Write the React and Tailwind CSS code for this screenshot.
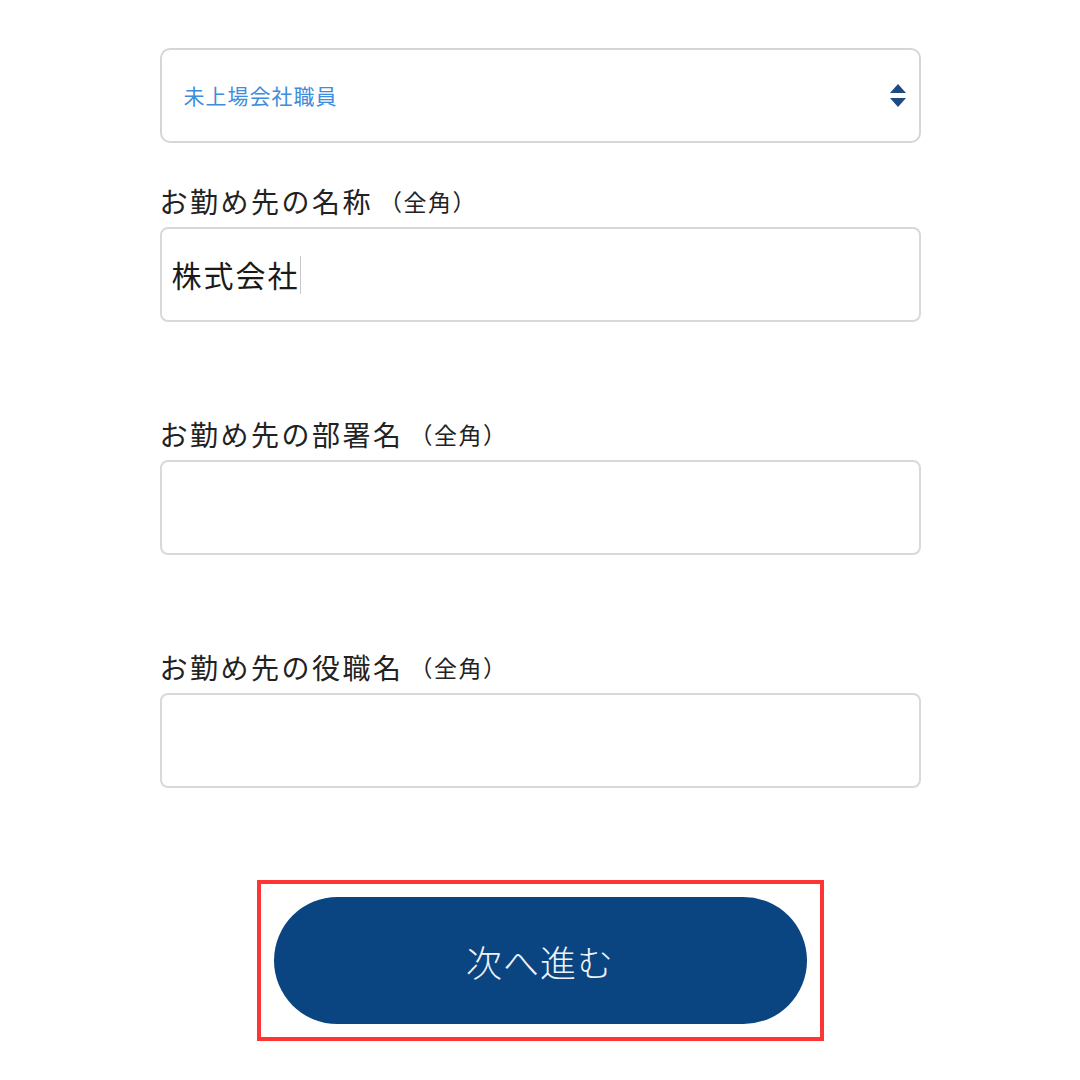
export default function App() {
  const font = { fontFamily: '"Noto Sans CJK JP", "Noto Sans", sans-serif' };
  const Label = ({ main }) => (
    <div className="h-[36px] flex items-center mb-[8px] text-[#222222]">
      <span className="text-[28px] leading-[36px] tracking-[2.5px]">{main}</span>
      <span className="text-[23px] leading-[36px] tracking-[1.5px] ml-[6px]">（全角）</span>
    </div>
  );
  return (
    <div className="w-[1080px] h-[1080px] bg-white overflow-hidden" style={font}>
      <div className="w-[761px] mx-auto pt-[48px] flex flex-col">
        <div className="h-[95px] border-2 border-[#d6d6d6] rounded-[10px] flex items-center justify-between pl-[22px] pr-[11px]">
          <span className="text-[21px] text-[#3d8ddb] tracking-[1px]">未上場会社職員</span>
          <svg width="18" height="26" viewBox="0 0 18 26" className="mr-[1px]">
            <path d="M9 1 L17 10 L1 10 Z" fill="#1d4a82" />
            <path d="M1 15 L17 15 L9 24 Z" fill="#1d4a82" />
          </svg>
        </div>

        <div className="mt-[40px]">
          <Label main="お勤め先の名称" />
        </div>
        <div className="h-[95px] border-2 border-[#d9d9d9] rounded-[8px] flex items-center pl-[10px]">
          <span className="text-[30px] text-[#1a1a1a] tracking-[2px]">株式会社</span>
          <div className="w-[1px] h-[38px] bg-[#c8c8c8]" />
        </div>

        <div className="mt-[94px]">
          <Label main="お勤め先の部署名" />
        </div>
        <div className="h-[95px] border-2 border-[#d9d9d9] rounded-[8px]" />

        <div className="mt-[94px]">
          <Label main="お勤め先の役職名" />
        </div>
        <div className="h-[95px] border-2 border-[#d9d9d9] rounded-[8px]" />
      </div>

      <div className="mt-[92px] mx-auto w-[567px] h-[161px] border-4 border-[#ff3535] p-[13px]">
        <div className="w-full h-full rounded-full bg-[#0a4581] flex items-center justify-center">
          <span className="text-[36px] font-light text-[#eef2f7] tracking-[1px]">次へ進む</span>
        </div>
      </div>
    </div>
  );
}
